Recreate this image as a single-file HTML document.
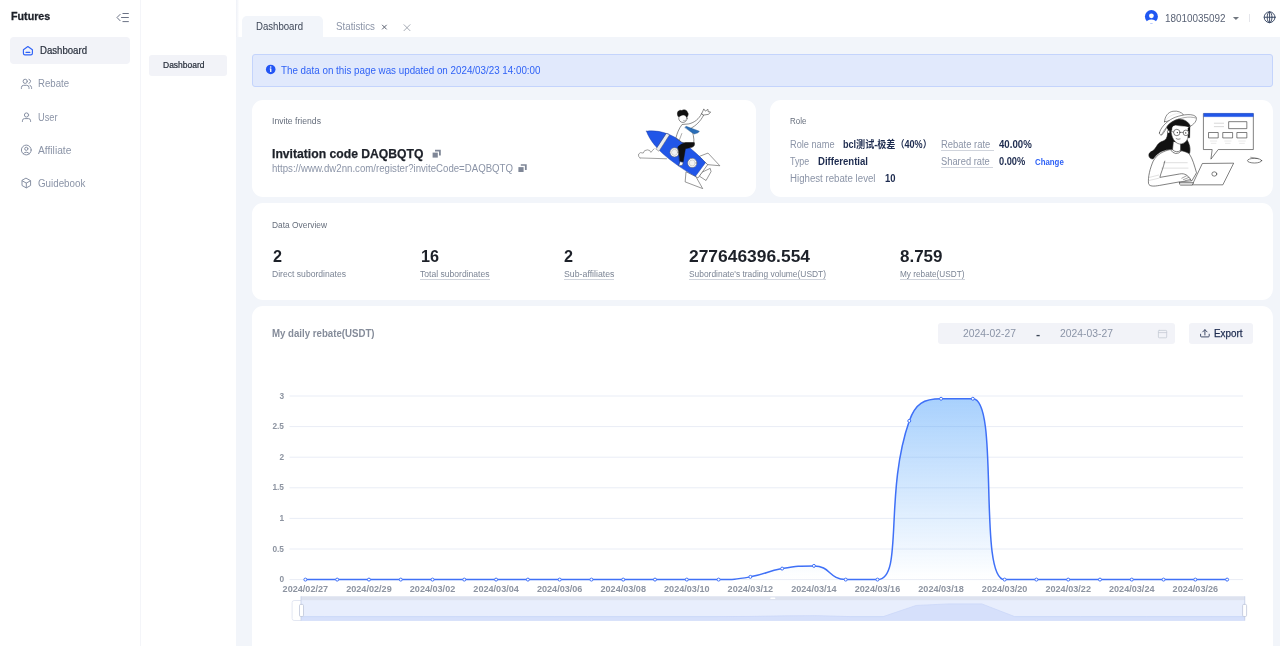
<!DOCTYPE html>
<html lang="en">
<head>
<meta charset="utf-8">
<title>Futures - Dashboard</title>
<style>
*{box-sizing:border-box;margin:0;padding:0}
html,body{width:1280px;height:646px;overflow:hidden;background:#fff}
body{font-family:"Liberation Sans","Noto Sans CJK SC",sans-serif;color:#1d2129;position:relative}
.abs{position:absolute}
.t{position:absolute;white-space:nowrap;display:block;transform-origin:0 0}
.box{position:absolute}
.card{position:absolute;background:#fff;border-radius:11px}
.ul{position:absolute;height:1px;background:#d0d4dc}
</style>
</head>
<body>
<!-- main background -->
<div class="box" style="left:235.6px;top:0;width:1044.4px;height:646px;background:#f2f5fa"></div>
<div class="box" style="left:236px;top:0;width:1044px;height:37px;background:#fff"></div>
<div class="box" style="left:235.6px;top:0;width:3.8px;height:37px;background:linear-gradient(to right,rgba(228,232,242,.6),rgba(236,239,246,.4) 70%,rgba(236,239,246,0))"></div>
<!-- sidebar -->
<div class="box" style="left:140px;top:0;width:1px;height:646px;background:#f4f5f9"></div>
<div class="box" style="left:10px;top:37px;width:120px;height:27px;border-radius:4px;background:#f2f3f8"></div>
<div class="box" style="left:149px;top:55px;width:78px;height:21px;border-radius:3px;background:#f2f3f8"></div>
<!-- tabs -->
<div class="box" style="left:242.4px;top:15.6px;width:80.6px;height:21.4px;border-radius:5px 5px 0 0;background:#f2f5fa"></div>
<!-- alert -->
<div class="box" style="left:252px;top:54px;width:1021px;height:33px;border-radius:3px;background:#e1e9fc;border:1px solid #c4d4fc"></div>
<!-- cards -->
<div class="card" style="left:252px;top:100px;width:504px;height:97px"></div>
<div class="card" style="left:770px;top:100px;width:503px;height:97px"></div>
<div class="card" style="left:252px;top:203px;width:1021px;height:97px"></div>
<div class="card" style="left:252px;top:306px;width:1021px;height:360px"></div>
<!-- date picker & export -->
<div class="box" style="left:938px;top:323px;width:237px;height:21px;border-radius:3px;background:#f2f3f8"></div>
<div class="box" style="left:1189px;top:323px;width:64px;height:21px;border-radius:3px;background:#f2f3f8"></div>
<!-- header divider -->
<div class="box" style="left:1249px;top:14px;width:1px;height:8px;background:#e5e6eb"></div>
<!-- dotted underlines -->
<div class="ul" style="left:420px;top:279px;width:69.5px"></div>
<div class="ul" style="left:563.75px;top:279px;width:50.5px"></div>
<div class="ul" style="left:688.5px;top:279px;width:137px"></div>
<div class="ul" style="left:900px;top:279px;width:64.5px"></div>
<div class="ul" style="left:940.5px;top:150px;width:53px"></div>
<div class="ul" style="left:940.5px;top:167px;width:52.5px"></div>
<svg class="abs" style="left:0;top:0;will-change:transform" width="1280" height="646" viewBox="0 0 1280 646">
<defs><linearGradient id="ag" x1="0" y1="0" x2="0" y2="1"><stop offset="0" stop-color="#58a6fb" stop-opacity="0.52"/><stop offset="1" stop-color="#58a6fb" stop-opacity="0"/></linearGradient></defs>
<line x1="289.5" x2="1243.0" y1="579.60" y2="579.60" stroke="#e9edf6" stroke-width="1"/>
<line x1="289.5" x2="1243.0" y1="549.00" y2="549.00" stroke="#e9edf6" stroke-width="1"/>
<line x1="289.5" x2="1243.0" y1="518.40" y2="518.40" stroke="#e9edf6" stroke-width="1"/>
<line x1="289.5" x2="1243.0" y1="487.80" y2="487.80" stroke="#e9edf6" stroke-width="1"/>
<line x1="289.5" x2="1243.0" y1="457.20" y2="457.20" stroke="#e9edf6" stroke-width="1"/>
<line x1="289.5" x2="1243.0" y1="426.60" y2="426.60" stroke="#e9edf6" stroke-width="1"/>
<line x1="289.5" x2="1243.0" y1="396.00" y2="396.00" stroke="#e9edf6" stroke-width="1"/>
<text x="284" y="582.20" text-anchor="end" font-size="8.3" font-weight="700" fill="#8d94a1" font-family='"Liberation Sans","Noto Sans CJK SC",sans-serif'>0</text>
<text x="284" y="551.60" text-anchor="end" font-size="8.3" font-weight="700" fill="#8d94a1" font-family='"Liberation Sans","Noto Sans CJK SC",sans-serif'>0.5</text>
<text x="284" y="521.00" text-anchor="end" font-size="8.3" font-weight="700" fill="#8d94a1" font-family='"Liberation Sans","Noto Sans CJK SC",sans-serif'>1</text>
<text x="284" y="490.40" text-anchor="end" font-size="8.3" font-weight="700" fill="#8d94a1" font-family='"Liberation Sans","Noto Sans CJK SC",sans-serif'>1.5</text>
<text x="284" y="459.80" text-anchor="end" font-size="8.3" font-weight="700" fill="#8d94a1" font-family='"Liberation Sans","Noto Sans CJK SC",sans-serif'>2</text>
<text x="284" y="429.20" text-anchor="end" font-size="8.3" font-weight="700" fill="#8d94a1" font-family='"Liberation Sans","Noto Sans CJK SC",sans-serif'>2.5</text>
<text x="284" y="398.60" text-anchor="end" font-size="8.3" font-weight="700" fill="#8d94a1" font-family='"Liberation Sans","Noto Sans CJK SC",sans-serif'>3</text>
<text x="305.39" y="592" text-anchor="middle" font-size="8.3" font-weight="700" fill="#8d94a1" font-family='"Liberation Sans","Noto Sans CJK SC",sans-serif' textLength="45.5" lengthAdjust="spacingAndGlyphs">2024/02/27</text>
<text x="368.96" y="592" text-anchor="middle" font-size="8.3" font-weight="700" fill="#8d94a1" font-family='"Liberation Sans","Noto Sans CJK SC",sans-serif' textLength="45.5" lengthAdjust="spacingAndGlyphs">2024/02/29</text>
<text x="432.52" y="592" text-anchor="middle" font-size="8.3" font-weight="700" fill="#8d94a1" font-family='"Liberation Sans","Noto Sans CJK SC",sans-serif' textLength="45.5" lengthAdjust="spacingAndGlyphs">2024/03/02</text>
<text x="496.09" y="592" text-anchor="middle" font-size="8.3" font-weight="700" fill="#8d94a1" font-family='"Liberation Sans","Noto Sans CJK SC",sans-serif' textLength="45.5" lengthAdjust="spacingAndGlyphs">2024/03/04</text>
<text x="559.66" y="592" text-anchor="middle" font-size="8.3" font-weight="700" fill="#8d94a1" font-family='"Liberation Sans","Noto Sans CJK SC",sans-serif' textLength="45.5" lengthAdjust="spacingAndGlyphs">2024/03/06</text>
<text x="623.23" y="592" text-anchor="middle" font-size="8.3" font-weight="700" fill="#8d94a1" font-family='"Liberation Sans","Noto Sans CJK SC",sans-serif' textLength="45.5" lengthAdjust="spacingAndGlyphs">2024/03/08</text>
<text x="686.79" y="592" text-anchor="middle" font-size="8.3" font-weight="700" fill="#8d94a1" font-family='"Liberation Sans","Noto Sans CJK SC",sans-serif' textLength="45.5" lengthAdjust="spacingAndGlyphs">2024/03/10</text>
<text x="750.36" y="592" text-anchor="middle" font-size="8.3" font-weight="700" fill="#8d94a1" font-family='"Liberation Sans","Noto Sans CJK SC",sans-serif' textLength="45.5" lengthAdjust="spacingAndGlyphs">2024/03/12</text>
<text x="813.93" y="592" text-anchor="middle" font-size="8.3" font-weight="700" fill="#8d94a1" font-family='"Liberation Sans","Noto Sans CJK SC",sans-serif' textLength="45.5" lengthAdjust="spacingAndGlyphs">2024/03/14</text>
<text x="877.49" y="592" text-anchor="middle" font-size="8.3" font-weight="700" fill="#8d94a1" font-family='"Liberation Sans","Noto Sans CJK SC",sans-serif' textLength="45.5" lengthAdjust="spacingAndGlyphs">2024/03/16</text>
<text x="941.06" y="592" text-anchor="middle" font-size="8.3" font-weight="700" fill="#8d94a1" font-family='"Liberation Sans","Noto Sans CJK SC",sans-serif' textLength="45.5" lengthAdjust="spacingAndGlyphs">2024/03/18</text>
<text x="1004.62" y="592" text-anchor="middle" font-size="8.3" font-weight="700" fill="#8d94a1" font-family='"Liberation Sans","Noto Sans CJK SC",sans-serif' textLength="45.5" lengthAdjust="spacingAndGlyphs">2024/03/20</text>
<text x="1068.19" y="592" text-anchor="middle" font-size="8.3" font-weight="700" fill="#8d94a1" font-family='"Liberation Sans","Noto Sans CJK SC",sans-serif' textLength="45.5" lengthAdjust="spacingAndGlyphs">2024/03/22</text>
<text x="1131.76" y="592" text-anchor="middle" font-size="8.3" font-weight="700" fill="#8d94a1" font-family='"Liberation Sans","Noto Sans CJK SC",sans-serif' textLength="45.5" lengthAdjust="spacingAndGlyphs">2024/03/24</text>
<text x="1195.33" y="592" text-anchor="middle" font-size="8.3" font-weight="700" fill="#8d94a1" font-family='"Liberation Sans","Noto Sans CJK SC",sans-serif' textLength="45.5" lengthAdjust="spacingAndGlyphs">2024/03/26</text>
<path d="M305.39,579.60 C305.39,579.60 321.28,579.60 337.18,579.60 C353.07,579.60 353.07,579.60 368.96,579.60 C384.85,579.60 384.85,579.60 400.74,579.60 C416.63,579.60 416.63,579.60 432.52,579.60 C448.42,579.60 448.42,579.60 464.31,579.60 C480.20,579.60 480.20,579.60 496.09,579.60 C511.98,579.60 511.98,579.60 527.88,579.60 C543.77,579.60 543.77,579.60 559.66,579.60 C575.55,579.60 575.55,579.60 591.44,579.60 C607.33,579.60 607.33,579.60 623.23,579.60 C639.12,579.60 639.12,579.60 655.01,579.60 C670.90,579.60 670.90,579.60 686.79,579.60 C702.68,579.60 702.71,579.60 718.58,579.60 C734.50,579.60 734.70,579.56 750.36,576.85 C766.48,574.05 766.02,571.36 782.14,568.58 C797.80,565.89 798.68,565.89 813.93,565.89 C830.47,565.89 829.14,579.60 845.71,579.60 C860.92,579.60 872.27,579.60 877.49,579.60 C904.06,579.60 883.63,493.87 909.27,420.91 C915.41,403.44 923.60,398.75 941.06,398.75 C955.38,398.75 968.15,398.75 972.84,398.75 C999.94,398.75 977.53,579.60 1004.62,579.60 C1009.31,579.60 1020.52,579.60 1036.41,579.60 C1052.30,579.60 1052.30,579.60 1068.19,579.60 C1084.08,579.60 1084.08,579.60 1099.97,579.60 C1115.87,579.60 1115.87,579.60 1131.76,579.60 C1147.65,579.60 1147.65,579.60 1163.54,579.60 C1179.43,579.60 1179.43,579.60 1195.33,579.60 C1211.22,579.60 1227.11,579.60 1227.11,579.60 L1227.11,579.60 L305.39,579.60 Z" fill="url(#ag)"/>
<path d="M305.39,579.60 C305.39,579.60 321.28,579.60 337.18,579.60 C353.07,579.60 353.07,579.60 368.96,579.60 C384.85,579.60 384.85,579.60 400.74,579.60 C416.63,579.60 416.63,579.60 432.52,579.60 C448.42,579.60 448.42,579.60 464.31,579.60 C480.20,579.60 480.20,579.60 496.09,579.60 C511.98,579.60 511.98,579.60 527.88,579.60 C543.77,579.60 543.77,579.60 559.66,579.60 C575.55,579.60 575.55,579.60 591.44,579.60 C607.33,579.60 607.33,579.60 623.23,579.60 C639.12,579.60 639.12,579.60 655.01,579.60 C670.90,579.60 670.90,579.60 686.79,579.60 C702.68,579.60 702.71,579.60 718.58,579.60 C734.50,579.60 734.70,579.56 750.36,576.85 C766.48,574.05 766.02,571.36 782.14,568.58 C797.80,565.89 798.68,565.89 813.93,565.89 C830.47,565.89 829.14,579.60 845.71,579.60 C860.92,579.60 872.27,579.60 877.49,579.60 C904.06,579.60 883.63,493.87 909.27,420.91 C915.41,403.44 923.60,398.75 941.06,398.75 C955.38,398.75 968.15,398.75 972.84,398.75 C999.94,398.75 977.53,579.60 1004.62,579.60 C1009.31,579.60 1020.52,579.60 1036.41,579.60 C1052.30,579.60 1052.30,579.60 1068.19,579.60 C1084.08,579.60 1084.08,579.60 1099.97,579.60 C1115.87,579.60 1115.87,579.60 1131.76,579.60 C1147.65,579.60 1147.65,579.60 1163.54,579.60 C1179.43,579.60 1179.43,579.60 1195.33,579.60 C1211.22,579.60 1227.11,579.60 1227.11,579.60" fill="none" stroke="#3f70f7" stroke-width="1.5" stroke-linejoin="round"/>
<circle cx="305.39" cy="579.60" r="1.5" fill="#fff" stroke="#3f70f7" stroke-width="1"/>
<circle cx="337.18" cy="579.60" r="1.5" fill="#fff" stroke="#3f70f7" stroke-width="1"/>
<circle cx="368.96" cy="579.60" r="1.5" fill="#fff" stroke="#3f70f7" stroke-width="1"/>
<circle cx="400.74" cy="579.60" r="1.5" fill="#fff" stroke="#3f70f7" stroke-width="1"/>
<circle cx="432.52" cy="579.60" r="1.5" fill="#fff" stroke="#3f70f7" stroke-width="1"/>
<circle cx="464.31" cy="579.60" r="1.5" fill="#fff" stroke="#3f70f7" stroke-width="1"/>
<circle cx="496.09" cy="579.60" r="1.5" fill="#fff" stroke="#3f70f7" stroke-width="1"/>
<circle cx="527.88" cy="579.60" r="1.5" fill="#fff" stroke="#3f70f7" stroke-width="1"/>
<circle cx="559.66" cy="579.60" r="1.5" fill="#fff" stroke="#3f70f7" stroke-width="1"/>
<circle cx="591.44" cy="579.60" r="1.5" fill="#fff" stroke="#3f70f7" stroke-width="1"/>
<circle cx="623.23" cy="579.60" r="1.5" fill="#fff" stroke="#3f70f7" stroke-width="1"/>
<circle cx="655.01" cy="579.60" r="1.5" fill="#fff" stroke="#3f70f7" stroke-width="1"/>
<circle cx="686.79" cy="579.60" r="1.5" fill="#fff" stroke="#3f70f7" stroke-width="1"/>
<circle cx="718.58" cy="579.60" r="1.5" fill="#fff" stroke="#3f70f7" stroke-width="1"/>
<circle cx="750.36" cy="576.85" r="1.5" fill="#fff" stroke="#3f70f7" stroke-width="1"/>
<circle cx="782.14" cy="568.58" r="1.5" fill="#fff" stroke="#3f70f7" stroke-width="1"/>
<circle cx="813.93" cy="565.89" r="1.5" fill="#fff" stroke="#3f70f7" stroke-width="1"/>
<circle cx="845.71" cy="579.60" r="1.5" fill="#fff" stroke="#3f70f7" stroke-width="1"/>
<circle cx="877.49" cy="579.60" r="1.5" fill="#fff" stroke="#3f70f7" stroke-width="1"/>
<circle cx="909.27" cy="420.91" r="1.5" fill="#fff" stroke="#3f70f7" stroke-width="1"/>
<circle cx="941.06" cy="398.75" r="1.5" fill="#fff" stroke="#3f70f7" stroke-width="1"/>
<circle cx="972.84" cy="398.75" r="1.5" fill="#fff" stroke="#3f70f7" stroke-width="1"/>
<circle cx="1004.62" cy="579.60" r="1.5" fill="#fff" stroke="#3f70f7" stroke-width="1"/>
<circle cx="1036.41" cy="579.60" r="1.5" fill="#fff" stroke="#3f70f7" stroke-width="1"/>
<circle cx="1068.19" cy="579.60" r="1.5" fill="#fff" stroke="#3f70f7" stroke-width="1"/>
<circle cx="1099.97" cy="579.60" r="1.5" fill="#fff" stroke="#3f70f7" stroke-width="1"/>
<circle cx="1131.76" cy="579.60" r="1.5" fill="#fff" stroke="#3f70f7" stroke-width="1"/>
<circle cx="1163.54" cy="579.60" r="1.5" fill="#fff" stroke="#3f70f7" stroke-width="1"/>
<circle cx="1195.33" cy="579.60" r="1.5" fill="#fff" stroke="#3f70f7" stroke-width="1"/>
<circle cx="1227.11" cy="579.60" r="1.5" fill="#fff" stroke="#3f70f7" stroke-width="1"/>
<rect x="292.1" y="600.5" width="952.15" height="20" rx="2" fill="#fff" stroke="#e3e7f2" stroke-width="1"/>
<rect x="301" y="596.25" width="943.75" height="4.2" fill="#dde2ef"/>
<rect x="301" y="600.25" width="943.75" height="20.35" fill="#e8eefd"/>
<path d="M291.6,616.6 L291.60,616.60 L324.47,616.60 L357.33,616.60 L390.20,616.60 L423.07,616.60 L455.94,616.60 L488.80,616.60 L521.67,616.60 L554.54,616.60 L587.41,616.60 L620.27,616.60 L653.14,616.60 L686.01,616.60 L718.87,616.60 L751.74,616.41 L784.61,615.83 L817.48,615.64 L850.34,616.60 L883.21,616.60 L916.08,605.45 L948.94,603.89 L981.81,603.89 L1014.68,616.60 L1047.55,616.60 L1080.41,616.60 L1113.28,616.60 L1146.15,616.60 L1179.02,616.60 L1211.88,616.60 L1244.75,616.60 L1244.75,620.6 L301,620.6 L301,616.6 Z" fill="#d6e0fb"/>
<rect x="301" y="616.5" width="943.75" height="4.1" fill="#d6e0fb"/>
<path d="M301.00,616.60 L324.47,616.60 L357.33,616.60 L390.20,616.60 L423.07,616.60 L455.94,616.60 L488.80,616.60 L521.67,616.60 L554.54,616.60 L587.41,616.60 L620.27,616.60 L653.14,616.60 L686.01,616.60 L718.87,616.60 L751.74,616.41 L784.61,615.83 L817.48,615.64 L850.34,616.60 L883.21,616.60 L916.08,605.45 L948.94,603.89 L981.81,603.89 L1014.68,616.60 L1047.55,616.60 L1080.41,616.60 L1113.28,616.60 L1146.15,616.60 L1179.02,616.60 L1211.88,616.60 L1244.75,616.60" fill="none" stroke="#c9d6f8" stroke-width="0.7"/>
<rect x="770.3" y="597.6" width="5" height="1.5" rx="0.7" fill="#fff"/>
<line x1="301" x2="301" y1="596.25" y2="620.6" stroke="#c3cde6" stroke-width="0.8"/>
<line x1="1244.75" x2="1244.75" y1="596.25" y2="620.6" stroke="#c3cde6" stroke-width="0.8"/>
<rect x="299.5" y="604.4" width="4" height="12.1" rx="1.2" fill="#fff" stroke="#b6bfd4" stroke-width="0.7"/>
<rect x="1242.6" y="604.4" width="4" height="12.1" rx="1.2" fill="#fff" stroke="#b6bfd4" stroke-width="0.7"/>
</svg>
<svg class="abs" style="left:0;top:0;pointer-events:none" width="1280" height="646" viewBox="0 0 1280 646" fill="none" stroke-linecap="round" stroke-linejoin="round">
<!-- collapse -->
<g stroke="#6b7285" stroke-width="1">
<path d="M120.1,14.4 L117,17.5 L120.1,20.7"/>
<path d="M122.9,13.5 H128.4 M121.5,17.5 H128.4 M122.9,21.6 H128.4"/>
</g>
<!-- home (active) -->
<g stroke="#2f62f6" stroke-width="1.15">
<path d="M27.9,46.5 L23.4,49.7 V53.2 Q23.4,54.8 25,54.8 H30.8 Q32.4,54.8 32.4,53.2 V49.7 Z"/>
<path d="M26,52.4 H29.8"/>
</g>
<!-- rebate: users -->
<g stroke="#8790a3" stroke-width="1">
<circle cx="25.2" cy="81.3" r="2.1"/>
<path d="M21.4,88.5 V87.6 Q21.4,85.3 23.7,85.3 H26.7 Q29,85.3 29,87.6 V88.5"/>
<path d="M28.9,79.3 Q30.6,79.8 30.6,81.3 Q30.6,82.8 28.9,83.3"/>
<path d="M31.6,88.5 V87.6 Q31.6,85.9 30,85.4"/>
</g>
<!-- user -->
<g stroke="#8790a3" stroke-width="1">
<circle cx="26.5" cy="115" r="2.1"/>
<path d="M22.4,121.5 V120.8 Q22.4,118.6 24.6,118.6 H28.4 Q30.6,118.6 30.6,120.8 V121.5"/>
</g>
<!-- affiliate: user circle -->
<g stroke="#8790a3" stroke-width="1">
<circle cx="26.3" cy="150" r="4.9"/>
<circle cx="26.3" cy="148.8" r="1.6"/>
<path d="M23.2,153.7 Q26.3,150.4 29.4,153.7"/>
</g>
<!-- guidebook: cube -->
<g stroke="#8790a3" stroke-width="1">
<path d="M26.3,178.3 L30.6,180.7 V185.5 L26.3,187.9 L22,185.5 V180.7 Z"/>
<path d="M22.2,180.8 L26.3,183.1 L30.4,180.8 M26.3,183.1 V187.7"/>
</g>
<!-- tab closes -->
<path d="M382.4,25.1 L386.4,29.1 M386.4,25.1 L382.4,29.1" stroke="#5a6070" stroke-width="1"/>
<path d="M404,24.7 L410,30.7 M410,24.7 L404,30.7" stroke="#8f95a1" stroke-width="0.8"/>
<!-- avatar -->
<g stroke="none">
<circle cx="1151.4" cy="16.6" r="6.5" fill="#1f57f2"/>
<circle cx="1151.4" cy="15.8" r="2.4" fill="#fff"/>
<ellipse cx="1151.4" cy="22.6" rx="5.2" ry="3" fill="#fff"/>
<rect x="1150.2" y="23.1" width="2.4" height="0.6" fill="#8fa9f8"/>
</g>
<!-- caret -->
<path d="M1232.9,17 H1239 L1235.95,20.1 Z" fill="#70767f" stroke="none"/>
<!-- globe -->
<g stroke="#3f4d68" stroke-width="1">
<circle cx="1269.6" cy="17.25" r="5.4"/>
<ellipse cx="1269.6" cy="17.25" rx="2.4" ry="5.4"/>
<path d="M1264.2,17.25 H1275 M1269.6,11.85 V22.65"/>
</g>
<!-- info -->
<g stroke="none">
<circle cx="270.7" cy="69.45" r="4.8" fill="#2355f5"/>
<rect x="270.1" y="68.6" width="1.3" height="3.4" fill="#fff"/>
<rect x="269.7" y="68.6" width="1.3" height="0.8" fill="#fff"/>
<circle cx="270.7" cy="67" r="0.8" fill="#fff"/>
</g>
<!-- copy icons -->
<g stroke="none" fill="#7f8797">
<rect x="432.6" y="152.6" width="5.2" height="5"/>
<path d="M435,149.8 H440.8 V155.6 H439 V151.4 H435 Z"/>
<rect x="518.4" y="167.1" width="5.2" height="4.9"/>
<path d="M520.8,164.2 H526.7 V170 H524.9 V165.8 H520.8 Z"/>
</g>
<!-- calendar -->
<g stroke="#c5cad4" stroke-width="0.8">
<rect x="1158.4" y="330.4" width="8.3" height="7.4" rx="0.8"/>
<path d="M1158.4,332.6 H1166.7"/>
</g>
<!-- export -->
<g stroke="#3a4663" stroke-width="0.95">
<path d="M1200.6,334.2 V336 Q1200.6,336.9 1201.5,336.9 H1208.3 Q1209.2,336.9 1209.2,336 V334.2"/>
<path d="M1204.9,335 V329.8 M1202.7,331.9 L1204.9,329.7 L1207.1,331.9"/>
</g>
</svg>

<svg class="abs" style="left:630px;top:105px" width="100" height="90" viewBox="0 0 718 646" fill="none" stroke-linecap="round" stroke-linejoin="round">
<!-- cloud -->
<path d="M72,380 Q55,372 62,352 Q72,335 95,345 Q100,322 125,322 Q145,322 150,340 Q160,328 172,315 L215,345 L215,384 Z" fill="#fff" stroke="none"/><path d="M72,380 Q55,372 62,352 Q72,335 95,345 Q100,322 125,322 Q145,322 150,340 Q160,328 172,315" stroke="#555" stroke-width="4"/>
<path d="M72,380 L262,386" stroke="#555" stroke-width="4"/>
<!-- fins -->
<path d="M500,368 L560,345 L645,436 L556,428 Z" fill="#fff" stroke="#444" stroke-width="4"/>
<path d="M402,482 L396,552 L522,600 L474,516 Z" fill="#fff" stroke="#444" stroke-width="4"/>
<path d="M518,482 L576,455 L582,478 L546,542 L500,512 Z" fill="#fff" stroke="#444" stroke-width="4"/>
<!-- tail ring -->
<path d="M538,410 L558,428 L488,524 L466,508 Z" fill="#fff" stroke="#444" stroke-width="4"/>
<!-- body -->
<path d="M118,188 C190,178 280,195 380,268 C450,322 505,372 542,414 L470,512 C410,482 330,428 262,372 C190,312 140,250 118,188 Z" fill="#2156e8" stroke="#16399c" stroke-width="3"/>
<!-- stripe -->
<path d="M262,204 L284,214 L208,332 L188,318 Z" fill="#ececec" stroke="#555" stroke-width="3"/>
<!-- windows -->
<circle cx="320" cy="340" r="33" fill="#fff" stroke="#666" stroke-width="4"/>
<circle cx="320" cy="340" r="22" fill="#f2f2f2" stroke="#999" stroke-width="3"/>
<circle cx="447" cy="416" r="33" fill="#fff" stroke="#666" stroke-width="4"/>
<circle cx="447" cy="416" r="22" fill="#f2f2f2" stroke="#999" stroke-width="3"/>
<!-- torso -->
<path d="M372,142 C350,170 338,205 330,235 L372,268 L398,272 L458,272 C462,240 452,200 440,165 C470,150 505,120 530,70 L515,60 C495,100 465,125 425,135 Z" fill="#fff" stroke="#333" stroke-width="4"/>
<path d="M372,205 L355,250" stroke="#333" stroke-width="3"/>
<!-- hand -->
<path d="M515,62 L530,28 L541,44 L560,31 L561,48 L579,50 L564,67 L530,72 Z" fill="#fff" stroke="#333" stroke-width="4"/>
<!-- tie -->
<path d="M395,160 L403,153 L498,188 L488,200 L462,208 L440,195 Z" fill="#2a6db8" stroke="#1d4f88" stroke-width="3"/>
<!-- head -->
<circle cx="380" cy="95" r="30" fill="#fff" stroke="#333" stroke-width="4"/>
<path d="M345,80 C330,55 350,30 372,40 C385,28 410,35 412,52 C425,62 415,85 405,88 C400,70 380,68 362,78 C355,82 350,85 345,80 Z" fill="#111" stroke="#111" stroke-width="3"/>
<path d="M385,112 Q392,116 398,110" stroke="#333" stroke-width="3"/>
<!-- leg -->
<path d="M344,300 C360,285 380,275 398,270 L462,270 C468,285 460,300 445,304 L398,314 L382,408 L358,404 Z" fill="#111" stroke="#111" stroke-width="3"/>
<path d="M360,408 L382,412 L376,432 L352,436 Z" fill="#fff" stroke="#333" stroke-width="3"/>
</svg>

<svg class="abs" style="left:1140px;top:100px" width="140" height="100" viewBox="0 0 904 646" fill="none" stroke-linecap="round" stroke-linejoin="round">
<!-- hair back -->
<path d="M195,150 C170,200 190,250 150,265 C100,280 110,320 70,335 C45,350 60,385 85,380 C120,330 160,320 200,318 L320,345 C330,300 310,270 300,250 L320,160 Z" fill="#111" stroke="#111" stroke-width="4"/>
<!-- body -->
<path d="M195,320 C150,330 110,350 85,395 C65,440 50,500 55,540 C60,560 90,558 125,552 L260,528 L335,522 L365,470 C350,420 340,380 318,348 C300,335 280,330 265,328 Z" fill="#fff" stroke="#333" stroke-width="4"/>
<path d="M195,320 Q230,370 268,328" stroke="#333" stroke-width="4"/>
<path d="M150,405 L305,405 M140,440 L310,440 M60,500 L120,485 M58,520 L122,505" stroke="#bbb" stroke-width="3"/>
<path d="M160,395 C150,440 135,470 128,500 L255,478 C290,470 315,490 330,520" stroke="#333" stroke-width="4"/>
<path d="M270,505 L300,490 M280,515 L315,500 M290,522 L325,512" stroke="#333" stroke-width="3"/>
<!-- neck -->
<path d="M215,270 L210,320 Q232,345 262,326 L262,280" fill="#fff" stroke="#333" stroke-width="4"/>
<g transform="translate(64.6,32.3) scale(0.4497)">
<!-- face -->
<path d="M300,320 C295,420 330,540 420,560 C500,565 545,500 552,440 L565,320 L420,260 Z" fill="#fff" stroke="#333" stroke-width="8"/>
<!-- hair top/fringe -->
<path d="M245,300 C280,250 350,205 420,200 C500,200 560,250 580,305 C500,310 420,300 340,285 C320,300 312,330 312,365 L285,360 C250,360 235,330 245,300 Z" fill="#111" stroke="#111" stroke-width="6"/>
<path d="M545,330 L575,310 L570,470 L548,470 Z" fill="#111" stroke="#111" stroke-width="4"/>
<circle cx="266" cy="386" r="18" fill="#fff" stroke="#333" stroke-width="7"/>
<circle cx="385" cy="395" r="46" fill="#fff" stroke="#333" stroke-width="9"/>
<circle cx="516" cy="400" r="40" fill="#fff" stroke="#333" stroke-width="9"/>
<path d="M431,392 L476,394 M339,388 L300,378" stroke="#333" stroke-width="8"/>
<circle cx="392" cy="396" r="9" fill="#222"/><circle cx="513" cy="401" r="9" fill="#222"/>
<path d="M375,484 Q400,502 432,488" stroke="#333" stroke-width="8"/>
<!-- hat dome -->
<path d="M208,240 C212,165 258,100 330,90 C400,80 452,105 480,140 C420,180 300,230 208,240 Z" fill="#fff" stroke="#333" stroke-width="8"/>
<path d="M225,215 C270,160 350,120 440,118" stroke="#ccc" stroke-width="5"/>
<!-- hat brim -->
<path d="M135,400 C150,330 230,240 330,190 C430,145 580,115 650,160 C690,190 655,265 580,305 C560,245 490,200 410,202 C340,215 280,265 248,300 C232,345 200,402 165,432 C145,430 132,415 135,400 Z" fill="#fff" stroke="#333" stroke-width="8"/>
<path d="M165,430 C200,350 270,272 340,234 C440,182 560,156 655,186" stroke="#333" stroke-width="6"/>
</g>
<!-- laptop -->
<path d="M405,410 L605,408 L535,548 L340,548 Z" fill="#fff" stroke="#333" stroke-width="4"/>
<path d="M255,534 L345,534 L338,550 L262,550 Q252,548 255,534 Z" fill="#eee" stroke="#333" stroke-width="4"/>
<ellipse cx="480" cy="478" rx="16" ry="14" stroke="#333" stroke-width="4"/>
<!-- bubble window -->
<path d="M412,88 L732,88 L732,320 L505,320 L458,382 L466,320 L412,320 Z" fill="#fff" stroke="#333" stroke-width="4"/>
<rect x="412" y="86" width="320" height="22" fill="#2156e8" stroke="#2156e8" stroke-width="2"/>
<rect x="575" y="140" width="115" height="45" stroke="#333" stroke-width="4"/>
<path d="M480,150 L540,150 M480,172 L540,172" stroke="#aaa" stroke-width="3"/>
<rect x="445" y="210" width="60" height="35" stroke="#333" stroke-width="4"/>
<rect x="537" y="210" width="61" height="35" stroke="#333" stroke-width="4"/>
<rect x="628" y="210" width="62" height="35" stroke="#333" stroke-width="4"/>
<path d="M455,265 L495,265 M547,265 L588,265 M638,265 L680,265 M460,280 L490,280 M552,280 L582,280 M643,280 L674,280" stroke="#ccc" stroke-width="3"/>
<!-- mouse -->
<ellipse cx="740" cy="392" rx="46" ry="15" fill="#fff" stroke="#333" stroke-width="4"/>
<path d="M715,370 L762,378" stroke="#333" stroke-width="3"/>
</svg>

<div id="txt" style="position:absolute;left:0;top:0;width:1280px;height:646px;will-change:transform">
<span class="t" id="t_fut" style="left:11.00px;top:11.00px;font-size:11.2px;line-height:11.2px;font-weight:700;color:#1d2129;transform:scaleX(0.9578);-webkit-text-stroke:0.3px #1d2129;">Futures</span>
<span class="t" id="m1" style="left:39.50px;top:46.00px;font-size:10px;line-height:10px;font-weight:400;color:#272e3b;transform:scaleX(0.9607);-webkit-text-stroke:0.2px #272e3b;">Dashboard</span>
<span class="t" id="m2" style="left:38.10px;top:79.00px;font-size:10px;line-height:10px;font-weight:400;color:#8b94a7;transform:scaleX(0.9612);">Rebate</span>
<span class="t" id="m3" style="left:38.20px;top:113.00px;font-size:10px;line-height:10px;font-weight:400;color:#8b94a7;transform:scaleX(0.9231);">User</span>
<span class="t" id="m4" style="left:38.20px;top:146.00px;font-size:10px;line-height:10px;font-weight:400;color:#8b94a7;transform:scaleX(1.0238);">Affiliate</span>
<span class="t" id="m5" style="left:38.20px;top:179.00px;font-size:10px;line-height:10px;font-weight:400;color:#8b94a7;transform:scaleX(0.9778);">Guidebook</span>
<span class="t" id="sub1" style="left:162.50px;top:62.00px;font-size:8.2px;line-height:8.2px;font-weight:400;color:#272e3b;transform:scaleX(1.0359);-webkit-text-stroke:0.2px #272e3b;">Dashboard</span>
<span class="t" id="tab1" style="left:256.00px;top:21.00px;font-size:10.5px;line-height:10.5px;font-weight:400;color:#3c4556;transform:scaleX(0.9148);">Dashboard</span>
<span class="t" id="tab2" style="left:336.00px;top:21.00px;font-size:10.5px;line-height:10.5px;font-weight:400;color:#8b94a7;transform:scaleX(0.9282);">Statistics</span>
<span class="t" id="phone" style="left:1165.00px;top:14.00px;font-size:10px;line-height:10px;font-weight:400;color:#596275;transform:scaleX(0.9904);">18010035092</span>
<span class="t" id="alert" style="left:281.00px;top:65.00px;font-size:10.5px;line-height:10.5px;font-weight:400;color:#2f62f6;transform:scaleX(0.9338);">The data on this page was updated on 2024/03/23 14:00:00</span>
<span class="t" id="inv" style="left:272.00px;top:117.00px;font-size:8.5px;line-height:8.5px;font-weight:400;color:#666e7c;transform:scaleX(1.0165);">Invite friends</span>
<span class="t" id="invc" style="left:272.00px;top:147.00px;font-size:13px;line-height:13px;font-weight:700;color:#1d2129;transform:scaleX(0.9364);-webkit-text-stroke:0.25px #1d2129;">Invitation code DAQBQTQ</span>
<span class="t" id="url" style="left:272.00px;top:164.00px;font-size:10.3px;line-height:10.3px;font-weight:400;color:#8b94a7;transform:scaleX(0.9368);">https://www.dw2nn.com/register?inviteCode=DAQBQTQ</span>
<span class="t" id="role" style="left:790.00px;top:117.00px;font-size:8.5px;line-height:8.5px;font-weight:400;color:#666e7c;transform:scaleX(0.9323);">Role</span>
<span class="t" id="rn_l" style="left:790.00px;top:140.00px;font-size:10px;line-height:10px;font-weight:400;color:#8b94a7;transform:scaleX(0.9202);">Role name</span>
<span class="t" id="rn_v" style="left:843.25px;top:140.00px;font-size:10px;line-height:10px;font-weight:700;color:#1d2b4f;transform:scaleX(0.9075);">bcl测试-极差（40%）</span>
<span class="t" id="ty_l" style="left:790.00px;top:157.00px;font-size:10px;line-height:10px;font-weight:400;color:#8b94a7;transform:scaleX(0.8876);">Type</span>
<span class="t" id="ty_v" style="left:818.25px;top:157.00px;font-size:10px;line-height:10px;font-weight:700;color:#1d2b4f;transform:scaleX(0.9572);">Differential</span>
<span class="t" id="hr_l" style="left:790.00px;top:174.00px;font-size:10px;line-height:10px;font-weight:400;color:#8b94a7;transform:scaleX(0.9673);">Highest rebate level</span>
<span class="t" id="hr_v" style="left:884.50px;top:174.00px;font-size:10px;line-height:10px;font-weight:700;color:#1d2b4f;transform:scaleX(0.9438);">10</span>
<span class="t" id="rr_l" style="left:940.75px;top:140.00px;font-size:10px;line-height:10px;font-weight:400;color:#8b94a7;transform:scaleX(0.9423);">Rebate rate</span>
<span class="t" id="rr_v" style="left:999.25px;top:140.00px;font-size:10px;line-height:10px;font-weight:700;color:#1d2b4f;transform:scaleX(0.9655);">40.00%</span>
<span class="t" id="sr_l" style="left:940.75px;top:157.00px;font-size:10px;line-height:10px;font-weight:400;color:#8b94a7;transform:scaleX(0.9327);">Shared rate</span>
<span class="t" id="sr_v" style="left:999.25px;top:157.00px;font-size:10px;line-height:10px;font-weight:700;color:#1d2b4f;transform:scaleX(0.9256);">0.00%</span>
<span class="t" id="chg" style="left:1034.50px;top:158.00px;font-size:8.6px;line-height:8.6px;font-weight:700;color:#2f62f6;transform:scaleX(0.9122);">Change</span>
<span class="t" id="dov" style="left:272.00px;top:221.00px;font-size:8.5px;line-height:8.5px;font-weight:400;color:#666e7c;transform:scaleX(0.9865);">Data Overview</span>
<span class="t" id="n1" style="left:272.50px;top:249.00px;font-size:16px;line-height:16px;font-weight:700;color:#1d2129;transform:scaleX(1.0105);">2</span>
<span class="t" id="n2" style="left:421.00px;top:249.00px;font-size:16px;line-height:16px;font-weight:700;color:#1d2129;transform:scaleX(1.0114);">16</span>
<span class="t" id="n3" style="left:564.25px;top:249.00px;font-size:16px;line-height:16px;font-weight:700;color:#1d2129;transform:scaleX(1.0105);">2</span>
<span class="t" id="n4" style="left:689.00px;top:249.00px;font-size:16px;line-height:16px;font-weight:700;color:#1d2129;transform:scaleX(1.0878);">277646396.554</span>
<span class="t" id="n5" style="left:900.00px;top:249.00px;font-size:16px;line-height:16px;font-weight:700;color:#1d2129;transform:scaleX(1.0613);">8.759</span>
<span class="t" id="l1" style="left:272.00px;top:270.00px;font-size:8.4px;line-height:8.4px;font-weight:400;color:#7b8494;transform:scaleX(1.0256);">Direct subordinates</span>
<span class="t" id="l2" style="left:420.00px;top:270.00px;font-size:8.4px;line-height:8.4px;font-weight:400;color:#7b8494;transform:scaleX(1.0223);">Total subordinates</span>
<span class="t" id="l3" style="left:563.75px;top:270.00px;font-size:8.4px;line-height:8.4px;font-weight:400;color:#7b8494;transform:scaleX(1.0463);">Sub-affiliates</span>
<span class="t" id="l4" style="left:688.50px;top:270.00px;font-size:8.4px;line-height:8.4px;font-weight:400;color:#7b8494;transform:scaleX(1.0030);">Subordinate's trading volume(USDT)</span>
<span class="t" id="l5" style="left:900.00px;top:270.00px;font-size:8.4px;line-height:8.4px;font-weight:400;color:#7b8494;transform:scaleX(0.9829);">My rebate(USDT)</span>
<span class="t" id="mdr" style="left:272.00px;top:329.00px;font-size:10px;line-height:10px;font-weight:700;color:#858c9a;transform:scaleX(0.9657);">My daily rebate(USDT)</span>
<span class="t" id="d1" style="left:962.50px;top:329.00px;font-size:10.3px;line-height:10.3px;font-weight:400;color:#8b94a7;transform:scaleX(1.0062);">2024-02-27</span>
<span class="t" id="dsep" style="left:1035.75px;top:329.00px;font-size:11px;line-height:11px;font-weight:700;color:#3c4556;transform:scaleX(1.1438);">-</span>
<span class="t" id="d2" style="left:1060.00px;top:329.00px;font-size:10.3px;line-height:10.3px;font-weight:400;color:#8b94a7;transform:scaleX(1.0062);">2024-03-27</span>
<span class="t" id="exp" style="left:1213.50px;top:329.00px;font-size:10.3px;line-height:10.3px;font-weight:400;color:#1d2b4f;transform:scaleX(0.9575);-webkit-text-stroke:0.25px #1d2b4f;">Export</span>
</div>
</body>
</html>
